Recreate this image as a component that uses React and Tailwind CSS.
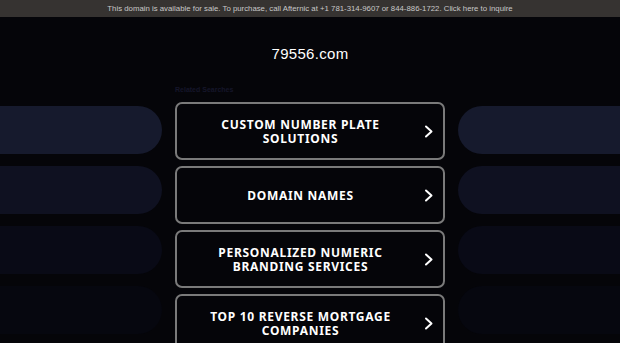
import React from "react";

const items = [
  "CUSTOM NUMBER PLATE SOLUTIONS",
  "DOMAIN NAMES",
  "PERSONALIZED NUMERIC BRANDING SERVICES",
  "TOP 10 REVERSE MORTGAGE COMPANIES",
];

const pills = ["bg-[#161a2d]", "bg-[#0f1121]", "bg-[#090a16]", "bg-[#06070f]"];

function Chevron() {
  return (
    <svg width="10" height="13" viewBox="0 0 10 13" fill="none">
      <polyline points="2,1.5 7.5,6.5 2,11.5" stroke="#ffffff" strokeWidth="2" strokeLinecap="round" strokeLinejoin="round" />
    </svg>
  );
}

export default function App() {
  return (
    <div className="w-full h-[343px] overflow-hidden bg-[#050509] flex flex-col" style={{ fontFamily: "'Liberation Sans', Arial, sans-serif" }}>
      <div className="h-[17px] shrink-0 bg-[#363331] flex items-center justify-center text-[7.8px] text-[#c8c8c8] leading-none">
        This domain is available for sale. To purchase, call Afternic at +1 781-314-9607 or 844-886-1722. Click here to inquire
      </div>
      <div className="pt-[28px] h-[67px] shrink-0 text-center text-white text-[15px] leading-[18px] tracking-[0.3px]">
        79556.com
      </div>
      <div className="grid grid-cols-[162px_270px_162px] gap-x-[13px] items-start">
        <div className="pt-[22px] flex flex-col gap-[12px]">
          {pills.map((c, i) => (
            <div key={i} className={`h-[48px] rounded-r-full ${c}`} />
          ))}
        </div>
        <div className="flex flex-col">
          <div className="h-[12px] text-[7px] leading-[12px] font-bold text-[#15162a]">Related Searches</div>
          <div className="mt-[6px] flex flex-col gap-[6px]">
            {items.map((t) => (
              <div key={t} className="h-[58px] border-2 border-[#7a7a7a] rounded-[7px] flex items-center pl-[10px] pr-[9px]">
                <div className="flex-1 mt-[2px] text-center text-white font-bold text-[12px] leading-[14px] tracking-[0.7px]" style={{ fontFamily: "'Noto Sans', 'DejaVu Sans', sans-serif" }}>
                  {t}
                </div>
                <div className="w-[20px] flex justify-end">
                  <Chevron />
                </div>
              </div>
            ))}
          </div>
        </div>
        <div className="pt-[22px] flex flex-col gap-[12px]">
          {pills.map((c, i) => (
            <div key={i} className={`h-[48px] rounded-l-full ${c}`} />
          ))}
        </div>
      </div>
    </div>
  );
}
